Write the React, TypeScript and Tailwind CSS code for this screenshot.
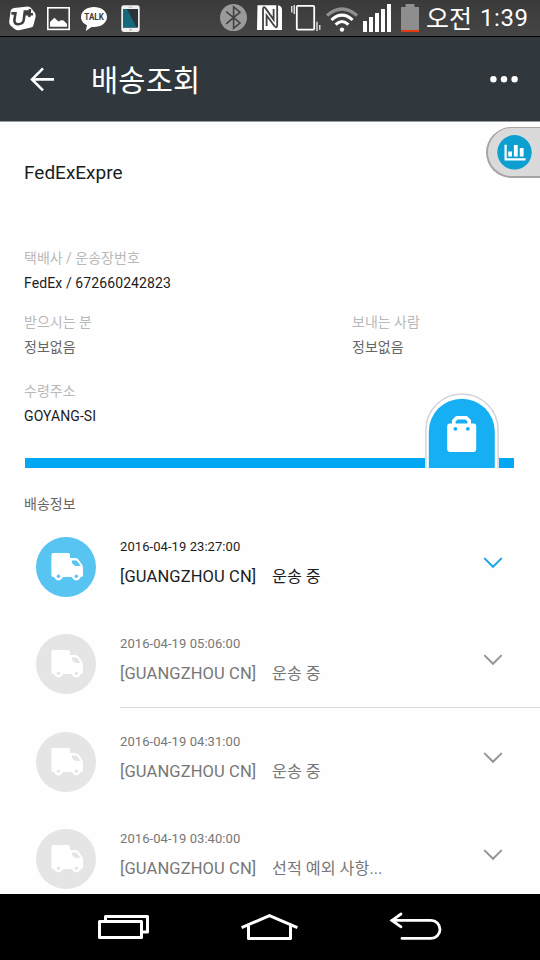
import React, { useState } from "react";

type TrackingEvent = {
  date: string;
  place: string;
  status: string;
  divider?: boolean;
};

const events: TrackingEvent[] = [
  { date: "2016-04-19 23:27:00", place: "[GUANGZHOU CN]", status: "운송 중" },
  { date: "2016-04-19 05:06:00", place: "[GUANGZHOU CN]", status: "운송 중", divider: true },
  { date: "2016-04-19 04:31:00", place: "[GUANGZHOU CN]", status: "운송 중" },
  { date: "2016-04-19 03:40:00", place: "[GUANGZHOU CN]", status: "선적 예외 사항..." },
];

const StatusBar: React.FC = () => (
  <div className="h-[37px] shrink-0 flex items-start bg-linear-to-b from-[#3a3a3a] to-[#454545] border-b border-black text-white">
    {/* U+ */}
    <svg className="ml-[9px] w-[27px] h-9 shrink-0" viewBox="0 0 27 36">
      <path d="M5 8 L19 6.6 Q21 6.6 22.5 8.5 L26 13 Q27 15 26.6 17 L24.5 25 Q24 27 22 27.6 L10 30.2 Q7.5 30.6 5.6 29 L1.5 25.4 Q0 24 0.2 21.5 L1.6 11 Q2 8.5 5 8Z" fill="#fff" />
      <path d="M2.4 13.4 H6.4 L5.4 20 Q5 24.4 9.6 24.2 Q14.4 23.8 14.8 19.5 L15.8 11.6 H20 M16 14.2 H24 M21 9 L20.2 17" fill="none" stroke="#3f3f3f" strokeWidth="2.6" />
    </svg>
    {/* Gallery */}
    <svg className="ml-[11px] w-[23px] h-9 shrink-0" viewBox="0 0 23 36">
      <rect x="0.8" y="7.8" width="21.4" height="21.6" fill="none" stroke="#fff" strokeWidth="1.6" />
      <path d="M3 26.8 V22 L7.4 17.8 L11.4 21.6 L14 20.2 L16.6 20.6 L20 24 V26.8Z" fill="#fff" />
    </svg>
    {/* Talk */}
    <svg className="ml-[11px] w-[26px] h-9 shrink-0" viewBox="0 0 26 36">
      <path d="M13 7 C20 7 26 11 26 17 C26 23 20 27 13 27 L10.5 27 L4.8 31 L6 25.3 C2.5 23.6 0 20.8 0 17 C0 11 6 7 13 7Z" fill="#fff" />
      <text x="13.1" y="20.4" textAnchor="middle" textLength="19.5" lengthAdjust="spacingAndGlyphs" fontSize="9" fontWeight="700" fontFamily="Roboto, sans-serif" fill="#3c3c3c">TALK</text>
    </svg>
    {/* Phone */}
    <svg className="ml-[14px] w-[19px] h-9 shrink-0" viewBox="0 0 19 36">
      <rect x="0.3" y="5.3" width="18.4" height="26.6" rx="2.4" fill="#f1f1f1" />
      <rect x="2" y="9" width="15" height="18.6" fill="#2b3539" />
      <path d="M2 9 H6 L15.6 27.6 H2Z" fill="#14697a" />
      <circle cx="9.5" cy="29.7" r="1.2" fill="#bbb" />
      <path d="M7.5 7.2 H11.5" stroke="#aaa" strokeWidth="0.8" />
    </svg>
    {/* Bluetooth */}
    <svg className="ml-[80px] w-[27px] h-9 shrink-0" viewBox="0 0 27 36">
      <circle cx="13.5" cy="17.6" r="13.5" fill="#9a9a9a" />
      <path d="M6.2 11.6 L20 23 L13.6 28.2 V7 L20 12.2 L6.2 23.8" fill="none" stroke="#424242" strokeWidth="1.6" />
    </svg>
    {/* NFC */}
    <svg className="ml-[10px] w-[25px] h-9 shrink-0" viewBox="0 0 25 36">
      <path d="M0.5 5.2 H20 Q25 5.2 25 10 V30 H0Z" fill="#fff" />
      <path d="M6 30 V9.5 Q6 5.6 8.6 8.4 L16.6 19.6 V9" fill="none" stroke="#404040" strokeWidth="1.8" />
      <path d="M9.6 26 V15.5 L17.4 26 Q20.2 29 20.2 25 V5" fill="none" stroke="#404040" strokeWidth="1.8" />
    </svg>
    {/* Vibration */}
    <svg className="ml-[9px] w-[30px] h-9 shrink-0" viewBox="0 0 30 36">
      <rect x="5.8" y="5.8" width="17.4" height="23.8" rx="1" fill="none" stroke="#fff" strokeWidth="1.8" />
      <path d="M0.8 6 V12.6 M3.2 5 V14 M26 21.8 V31 M28.8 25 V29.8" stroke="#fff" strokeWidth="1.2" />
    </svg>
    {/* Wifi */}
    <svg className="ml-[5px] w-[32px] h-9 shrink-0" viewBox="0 0 32 36">
      <path d="M1 15.6 Q16 2.4 31 15.6" fill="none" stroke="#8f8f8f" strokeWidth="3.2" />
      <path d="M5.4 20 Q16 10.2 26.6 20 M9.6 24.6 Q16 18.4 22.4 24.6" fill="none" stroke="#fff" strokeWidth="3" />
      <circle cx="16" cy="29.6" r="2.2" fill="#fff" />
    </svg>
    {/* Signal */}
    <svg className="ml-[5px] w-[28px] h-9 shrink-0" viewBox="0 0 28 36" fill="#fff">
      <rect x="0" y="21" width="4" height="11" />
      <rect x="6" y="17" width="4" height="15" />
      <rect x="12" y="13" width="4" height="19" />
      <rect x="18" y="9" width="4" height="23" />
      <rect x="24" y="4" width="4" height="28" />
    </svg>
    {/* Battery */}
    <svg className="ml-[10px] w-[18px] h-9 shrink-0" viewBox="0 0 18 36">
      <path d="M4.5 4 H13.5 V7 H18 V32 H0 V7 H4.5Z" fill="#8e8e8e" />
      <rect y="30" width="18" height="2" fill="#e03c10" />
    </svg>
    <span className="ml-[7px] flex text-[25px] whitespace-nowrap">
      <span className="w-[54px] leading-[40px]">오전</span>
      <span className="text-[24px] leading-[37px] tracking-[0.6px]">1:39</span>
    </span>
  </div>
);

const Header: React.FC = () => (
  <div className="h-[85px] shrink-0 flex items-center bg-[#30373d] border-b border-[#9a9da0] text-white">
    <svg className="ml-[29px] w-[26px] h-[26px]" viewBox="0 0 26 26" fill="none" stroke="#fff" strokeWidth="2.6">
      <path d="M25 13.4 H3 M14 2.4 L3 13.4 L14 24.4" />
    </svg>
    <h1 className="ml-[36px] pt-[3px] text-[29.5px] leading-10 tracking-[0.2px] whitespace-nowrap">배송조회</h1>
    <svg className="ml-auto mr-[22px] w-7 h-2" viewBox="0 0 28 8" fill="#fff">
      <circle cx="3.4" cy="4.2" r="3.2" />
      <circle cx="14" cy="4.2" r="3.2" />
      <circle cx="24.6" cy="4.2" r="3.2" />
    </svg>
  </div>
);

const Truck: React.FC<{ active: boolean }> = ({ active }) => {
  const bg = active ? "#58c4f2" : "#e5e5e5";
  return (
    <svg className="w-[60px] h-[60px] shrink-0" viewBox="0 0 60 60">
      <circle cx="30" cy="30" r="30" fill={bg} />
      <path d="M17.4 16 H32 Q34 16 34 18 V21 H39.5 Q41.4 21 42.6 22.8 L46 27.6 Q47 29 47 31 V38 Q47 40 45 40 H17.4 Q15.4 40 15.4 38 V18 Q15.4 16 17.4 16Z" fill="#fff" />
      <path d="M36 23.6 H39.8 Q40.8 23.6 41.6 24.8 L44.8 29 H40.5 Q39 29 38 28 L36 26Z" fill={bg} />
      <circle cx="22.5" cy="39" r="4.4" fill="#fff" />
      <circle cx="40.3" cy="39" r="4.4" fill="#fff" />
      <circle cx="22.5" cy="39.2" r="1.7" fill={bg} />
      <circle cx="40.3" cy="39.2" r="1.7" fill={bg} />
    </svg>
  );
};

const Field: React.FC<{ label: string; value: string; muted?: boolean }> = ({ label, value, muted }) => (
  <div className="text-[14px] leading-[25px] whitespace-nowrap">
    <p className="text-[#b9b9b9]">{label}</p>
    <p className={muted ? "text-[#666]" : "text-[#1c1c1c] tracking-[0.1px]"}>{value}</p>
  </div>
);

const NavBar: React.FC = () => (
  <div className="h-[66px] shrink-0 flex items-center bg-black">
    {/* Recent apps */}
    <svg className="ml-[97px] w-[53px] h-[30px]" viewBox="0 0 53 30" fill="none" stroke="#fff" strokeWidth="3" strokeLinejoin="round">
      <rect x="2.5" y="9.5" width="42" height="16" />
      <path d="M8.5 9 V4.5 H50.5 V20 H45" />
    </svg>
    {/* Home */}
    <svg className="ml-[90px] w-[60px] h-[30px]" viewBox="0 0 60 30" fill="none" stroke="#fff" strokeWidth="3" strokeLinejoin="round">
      <path d="M1.6 15.6 L29.5 3.6 L57.4 15.6" />
      <path d="M8.5 14 V26.4 H50.5 V14" />
    </svg>
    {/* Back */}
    <svg className="ml-[88px] w-[54px] h-[30px]" viewBox="0 0 54 30" fill="none" stroke="#fff" strokeWidth="2.8" strokeLinecap="round">
      <path d="M4 8.4 H43 A9 9 0 0 1 43 26.4 H14" />
      <path d="M13 2 L4 8.4 L13 14.8" />
    </svg>
  </div>
);

const App: React.FC = () => {
  const [selected, setSelected] = useState(0);

  return (
    <div className="w-[540px] h-[960px] flex flex-col overflow-hidden bg-[#fefefe] font-[Roboto,'Noto_Sans_CJK_KR',sans-serif]">
      <StatusBar />
      <Header />

      <main className="relative flex-1 min-h-0 overflow-hidden">
        {/* Floating stats tab */}
        <button type="button" className="absolute right-0 top-[5px] w-[54px] h-[51px] pl-[9px] flex items-center rounded-l-full bg-[#dadada] border-l-2 border-t border-b-2 border-[#a7a4a3]">
          <svg className="w-[35px] h-[35px] shrink-0" viewBox="0 0 35 35">
            <circle cx="17.5" cy="17.3" r="17.2" fill="#0d9fd0" />
            <path d="M8.6 9.8 V24.4 H28.6" fill="none" stroke="#fff" strokeWidth="2.2" />
            <path d="M11.2 16.4 H15 V21.6 H11.2Z M16.9 10 H20.7 V21.6 H16.9Z M22.8 13 H26.6 V21.6 H22.8Z" fill="#fff" />
          </svg>
        </button>

        <section className="px-6 pt-[39px]">
          <h2 className="text-[19px] leading-6 text-[#1c1c1c]">FedExExpre</h2>

          <div className="mt-[61px]">
            <Field label="택배사 / 운송장번호" value="FedEx / 672660242823" />
          </div>
          <div className="mt-[14px] grid grid-cols-[328px_1fr]">
            <Field label="받으시는 분" value="정보없음" muted />
            <Field label="보내는 사람" value="정보없음" muted />
          </div>
          <div className="mt-[19px]">
            <Field label="수령주소" value="GOYANG-SI" />
          </div>
        </section>

        {/* Progress */}
        <div className="mt-[-36px] ml-[25px] mr-[26px] h-[75px] flex items-end">
          <div className="flex-1 h-[10px] bg-[#02a8f3]" />
          <svg className="w-[74px] h-[75px] shrink-0" viewBox="0 0 74 75">
            <path d="M0.9 75 V37 A36.1 36.1 0 0 1 73.1 37 V75" fill="#fff" stroke="#d5d3d9" strokeWidth="1.5" />
            <path d="M3.8 75 V38.7 A33 33 0 0 1 69.8 38.7 V75Z" fill="#17aff3" />
            <path d="M28.8 32 V27.8 L31.8 24.8 H41.2 L44.2 27.8 V32" fill="none" stroke="#fff" strokeWidth="3.6" strokeLinejoin="round" />
            <rect x="22.2" y="30.6" width="29" height="28.4" rx="2.4" fill="#fff" />
            <circle cx="30.4" cy="35.8" r="1.9" fill="#17aff3" />
            <circle cx="42.8" cy="35.8" r="1.9" fill="#17aff3" />
          </svg>
          <div className="w-[15px] h-[10px] bg-[#02a8f3]" />
        </div>

        <h3 className="mt-6 ml-6 h-5 text-[14px] leading-[25px] text-[#666]">배송정보</h3>

        <ul>
          {events.map((event, index) => {
            const active = index === selected;
            return (
              <li key={event.date} onClick={() => setSelected(index)} className="h-[97.5px] pl-9 pt-[24.5px] flex items-start cursor-pointer">
                <Truck active={active} />
                <div className={`ml-6 mt-[-24.5px] pt-[24.5px] h-[98px] flex-1 flex border-b ${event.divider ? "border-[#dcdcdc]" : "border-transparent"}`}>
                  <div className={`flex-1 whitespace-nowrap ${active ? "text-[#1c1c1c]" : "text-[#777]"}`}>
                    <p className="text-[13px] leading-5 tracking-[0.07px]">{event.date}</p>
                    <p className="mt-2 flex text-[16.5px] leading-6">
                      <span className="w-[152px] tracking-[0.12px]">{event.place}</span>
                      <span className="text-[16.2px]">{event.status}</span>
                    </p>
                  </div>
                  <svg className="mt-5 mr-[37px] w-5 h-3" viewBox="0 0 20 12" fill="none" stroke={active ? "#1ca5e0" : "#969696"} strokeWidth="2" strokeLinecap="round">
                    <path d="M1.8 1.6 L10 9.8 L18.2 1.6" />
                  </svg>
                </div>
              </li>
            );
          })}
        </ul>
      </main>

      <NavBar />
    </div>
  );
};

export default App;
